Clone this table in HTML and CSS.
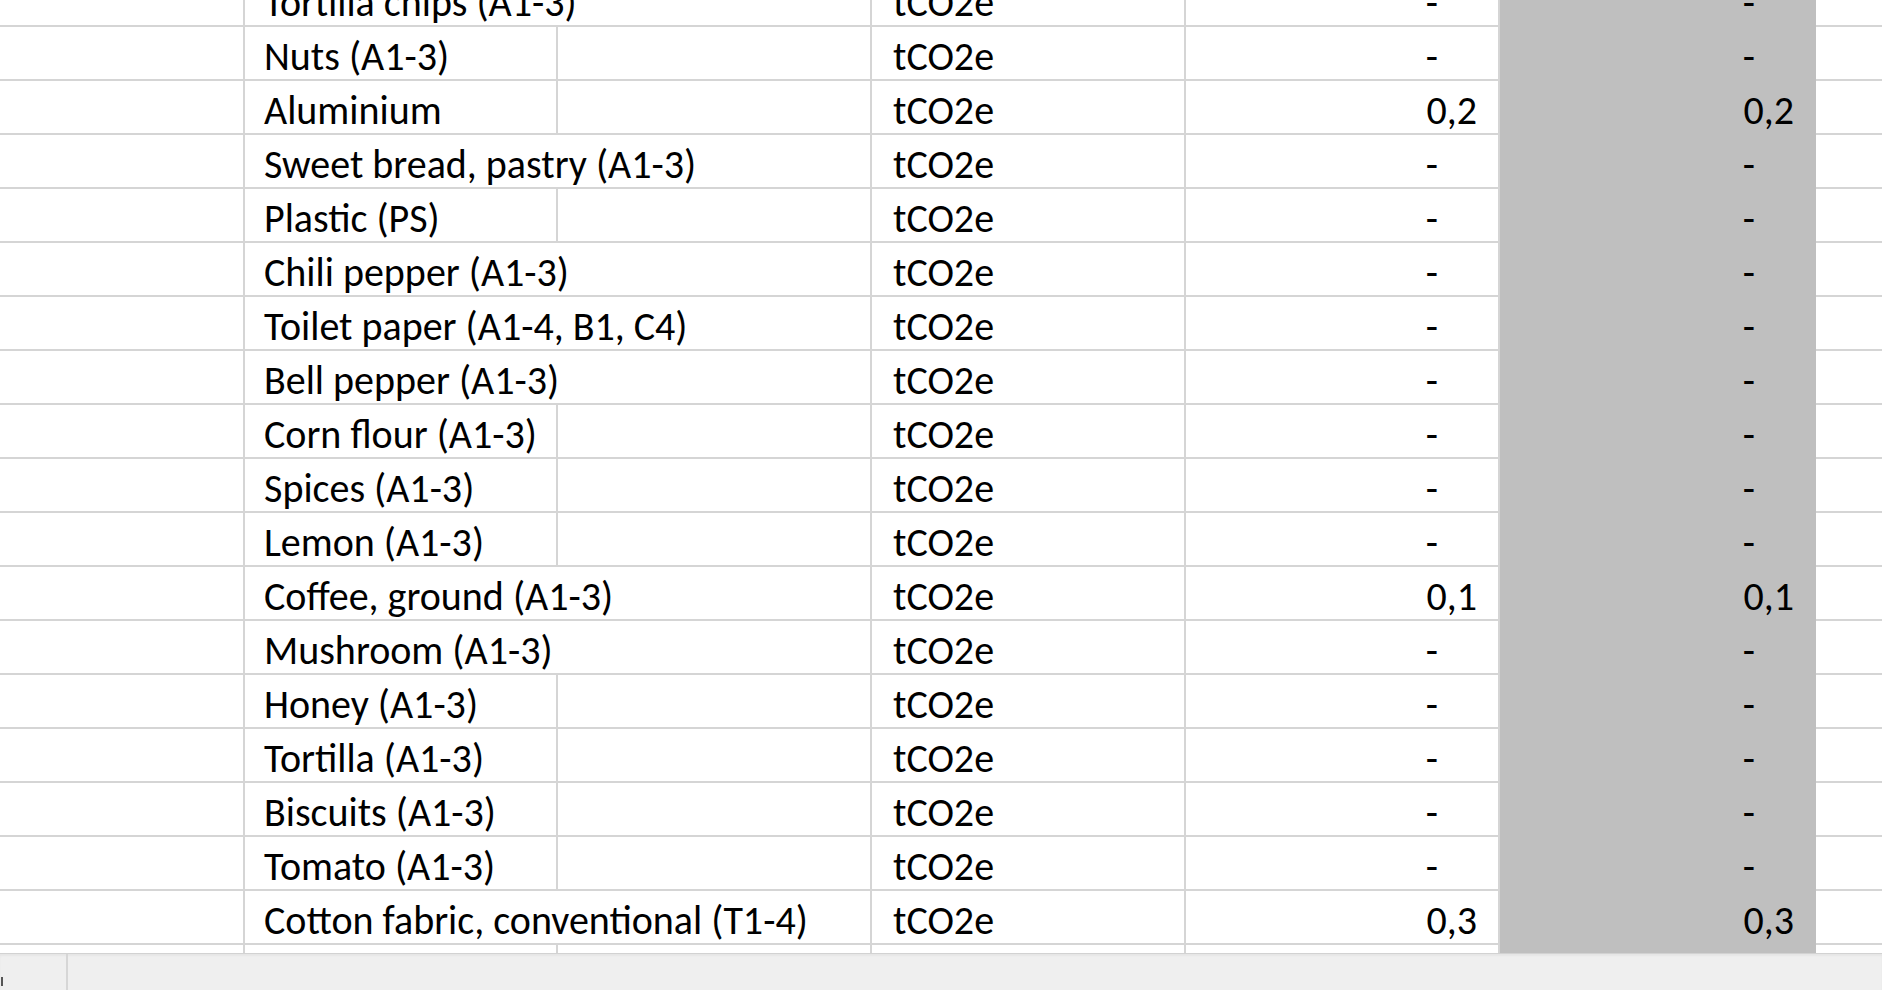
FILE: index.html
```html
<!DOCTYPE html>
<html>
<head>
<meta charset="utf-8">
<link rel="stylesheet" href="styles.css">
</head>
<body>
<div class="sheet">
  <div class="rows">
    <div class="row"><div class="c a"></div><div class="c b span">Tortilla chips (A1-3)</div><div class="c d">tCO2e</div><div class="c n"><span class="dash">-</span></div><div class="c g"><span class="dash">-</span></div><div class="c z"></div></div>
    <div class="row"><div class="c a"></div><div class="c b">Nuts (A1-3)</div><div class="c e"></div><div class="c d">tCO2e</div><div class="c n"><span class="dash">-</span></div><div class="c g"><span class="dash">-</span></div><div class="c z"></div></div>
    <div class="row"><div class="c a"></div><div class="c b">Aluminium</div><div class="c e"></div><div class="c d">tCO2e</div><div class="c n">0,2</div><div class="c g">0,2</div><div class="c z"></div></div>
    <div class="row"><div class="c a"></div><div class="c b span">Sweet bread, pastry (A1-3)</div><div class="c d">tCO2e</div><div class="c n"><span class="dash">-</span></div><div class="c g"><span class="dash">-</span></div><div class="c z"></div></div>
    <div class="row"><div class="c a"></div><div class="c b">Plastic (PS)</div><div class="c e"></div><div class="c d">tCO2e</div><div class="c n"><span class="dash">-</span></div><div class="c g"><span class="dash">-</span></div><div class="c z"></div></div>
    <div class="row"><div class="c a"></div><div class="c b span">Chili pepper (A1-3)</div><div class="c d">tCO2e</div><div class="c n"><span class="dash">-</span></div><div class="c g"><span class="dash">-</span></div><div class="c z"></div></div>
    <div class="row"><div class="c a"></div><div class="c b span">Toilet paper (A1-4, B1, C4)</div><div class="c d">tCO2e</div><div class="c n"><span class="dash">-</span></div><div class="c g"><span class="dash">-</span></div><div class="c z"></div></div>
    <div class="row"><div class="c a"></div><div class="c b span">Bell pepper (A1-3)</div><div class="c d">tCO2e</div><div class="c n"><span class="dash">-</span></div><div class="c g"><span class="dash">-</span></div><div class="c z"></div></div>
    <div class="row"><div class="c a"></div><div class="c b">Corn flour (A1-3)</div><div class="c e"></div><div class="c d">tCO2e</div><div class="c n"><span class="dash">-</span></div><div class="c g"><span class="dash">-</span></div><div class="c z"></div></div>
    <div class="row"><div class="c a"></div><div class="c b">Spices (A1-3)</div><div class="c e"></div><div class="c d">tCO2e</div><div class="c n"><span class="dash">-</span></div><div class="c g"><span class="dash">-</span></div><div class="c z"></div></div>
    <div class="row"><div class="c a"></div><div class="c b">Lemon (A1-3)</div><div class="c e"></div><div class="c d">tCO2e</div><div class="c n"><span class="dash">-</span></div><div class="c g"><span class="dash">-</span></div><div class="c z"></div></div>
    <div class="row"><div class="c a"></div><div class="c b span">Coffee, ground (A1-3)</div><div class="c d">tCO2e</div><div class="c n">0,1</div><div class="c g">0,1</div><div class="c z"></div></div>
    <div class="row"><div class="c a"></div><div class="c b span">Mushroom (A1-3)</div><div class="c d">tCO2e</div><div class="c n"><span class="dash">-</span></div><div class="c g"><span class="dash">-</span></div><div class="c z"></div></div>
    <div class="row"><div class="c a"></div><div class="c b">Honey (A1-3)</div><div class="c e"></div><div class="c d">tCO2e</div><div class="c n"><span class="dash">-</span></div><div class="c g"><span class="dash">-</span></div><div class="c z"></div></div>
    <div class="row"><div class="c a"></div><div class="c b">Tortilla (A1-3)</div><div class="c e"></div><div class="c d">tCO2e</div><div class="c n"><span class="dash">-</span></div><div class="c g"><span class="dash">-</span></div><div class="c z"></div></div>
    <div class="row"><div class="c a"></div><div class="c b">Biscuits (A1-3)</div><div class="c e"></div><div class="c d">tCO2e</div><div class="c n"><span class="dash">-</span></div><div class="c g"><span class="dash">-</span></div><div class="c z"></div></div>
    <div class="row"><div class="c a"></div><div class="c b">Tomato (A1-3)</div><div class="c e"></div><div class="c d">tCO2e</div><div class="c n"><span class="dash">-</span></div><div class="c g"><span class="dash">-</span></div><div class="c z"></div></div>
    <div class="row"><div class="c a"></div><div class="c b span">Cotton fabric, conventional (T1-4)</div><div class="c d">tCO2e</div><div class="c n">0,3</div><div class="c g">0,3</div><div class="c z"></div></div>
    <div class="row"><div class="c a"></div><div class="c b"></div><div class="c e"></div><div class="c d"></div><div class="c n"></div><div class="c g"></div><div class="c z"></div></div>
  </div>
</div>
<div class="bar">
  <div class="bar-left"><span class="mark"></span></div>
  <div class="bar-rest"></div>
</div>
</body>
</html>
```
FILE: styles.css
```css
html, body {
  margin: 0;
  padding: 0;
  background: #ffffff;
  width: 1882px;
  height: 990px;
  overflow: hidden;
}

body {
  font-family: Carlito, Calibri, "Open Sans", sans-serif;
  font-size: 40px;
  color: #000000;
  display: flex;
  flex-direction: column;
}

.sheet {
  height: 953px;
  overflow: hidden;
  flex: none;
}

.rows {
  margin-top: -27px;
}

.row {
  display: grid;
  grid-template-columns: 245px 313px 314px 314px 314px 316px 66px;
  height: 54px;
}

.c {
  box-sizing: border-box;
  height: 54px;
  border-right: 2px solid #d5d5d5;
  border-bottom: 2px solid #d5d5d5;
  line-height: 54px;
  padding-top: 3px;
  white-space: nowrap;
  overflow: hidden;
}

.b {
  padding-left: 19px;
}

.b.span {
  grid-column: span 2;
}

.d {
  padding-left: 21px;
}

.n {
  text-align: right;
  padding-right: 21px;
}

.g {
  background: #bfbfbf;
  border-right: none;
  border-bottom: none;
  text-align: right;
  padding-right: 22px;
}

.z {
  border-right: none;
}

.dash {
  display: inline-block;
  margin-right: 39px;
}

.bar {
  flex: 1;
  display: flex;
  background: #efefef;
  border-top: 1px solid #d2d2d2;
  box-shadow: inset 0 2px 2px rgba(0, 0, 0, 0.04);
}

.bar-left {
  width: 66px;
  border-right: 2px solid #d6d6d6;
  position: relative;
}

.mark {
  position: absolute;
  left: 1px;
  bottom: 4px;
  width: 2px;
  height: 9px;
  background: #555555;
}

.bar-rest {
  flex: 1;
}
```
